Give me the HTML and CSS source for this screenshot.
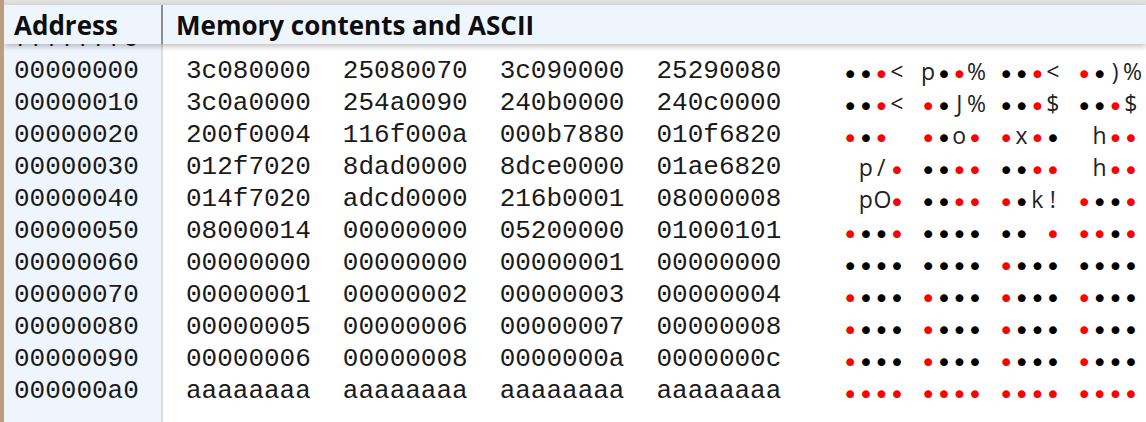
FILE: index.html
```html
<!DOCTYPE html>
<html>
<head>
<meta charset="utf-8">
<link rel="stylesheet" href="styles.css">
</head>
<body>
<div class="window">
  <div class="topstrip"></div>
  <div class="header">
    <div class="h-addr">Address</div>
    <div class="h-mem">Memory contents and ASCII</div>
  </div>
  <div class="body">
    <div class="addrcol">
      <div class="peek"><div class="line">fffffff0</div></div>
      <div class="line">00000000</div>
      <div class="line">00000010</div>
      <div class="line">00000020</div>
      <div class="line">00000030</div>
      <div class="line">00000040</div>
      <div class="line">00000050</div>
      <div class="line">00000060</div>
      <div class="line">00000070</div>
      <div class="line">00000080</div>
      <div class="line">00000090</div>
      <div class="line">000000a0</div>
    </div>
    <div class="datacol">
      <div class="peek"></div>

      <div class="line row">
        <div class="hex"><span>3c080000</span><span>25080070</span><span>3c090000</span><span>25290080</span></div>
        <div class="ascii">
          <span class="grp"><span class="ch dot">•</span><span class="ch dot">•</span><span class="ch dot red">•</span><span class="ch">&lt;</span></span>
          <span class="grp"><span class="ch">p</span><span class="ch dot">•</span><span class="ch dot red">•</span><span class="ch">%</span></span>
          <span class="grp"><span class="ch dot">•</span><span class="ch dot">•</span><span class="ch dot red">•</span><span class="ch">&lt;</span></span>
          <span class="grp"><span class="ch dot red">•</span><span class="ch dot">•</span><span class="ch">)</span><span class="ch">%</span></span>
        </div>
      </div>

      <div class="line row">
        <div class="hex"><span>3c0a0000</span><span>254a0090</span><span>240b0000</span><span>240c0000</span></div>
        <div class="ascii">
          <span class="grp"><span class="ch dot">•</span><span class="ch dot">•</span><span class="ch dot red">•</span><span class="ch">&lt;</span></span>
          <span class="grp"><span class="ch dot red">•</span><span class="ch dot">•</span><span class="ch">J</span><span class="ch">%</span></span>
          <span class="grp"><span class="ch dot">•</span><span class="ch dot">•</span><span class="ch dot red">•</span><span class="ch">$</span></span>
          <span class="grp"><span class="ch dot">•</span><span class="ch dot">•</span><span class="ch dot red">•</span><span class="ch">$</span></span>
        </div>
      </div>

      <div class="line row">
        <div class="hex"><span>200f0004</span><span>116f000a</span><span>000b7880</span><span>010f6820</span></div>
        <div class="ascii">
          <span class="grp"><span class="ch dot red">•</span><span class="ch dot">•</span><span class="ch dot red">•</span><span class="ch"></span></span>
          <span class="grp"><span class="ch dot red">•</span><span class="ch dot">•</span><span class="ch">o</span><span class="ch dot red">•</span></span>
          <span class="grp"><span class="ch dot red">•</span><span class="ch">x</span><span class="ch dot red">•</span><span class="ch dot">•</span></span>
          <span class="grp"><span class="ch"></span><span class="ch">h</span><span class="ch dot red">•</span><span class="ch dot red">•</span></span>
        </div>
      </div>

      <div class="line row">
        <div class="hex"><span>012f7020</span><span>8dad0000</span><span>8dce0000</span><span>01ae6820</span></div>
        <div class="ascii">
          <span class="grp"><span class="ch"></span><span class="ch">p</span><span class="ch">/</span><span class="ch dot red">•</span></span>
          <span class="grp"><span class="ch dot">•</span><span class="ch dot">•</span><span class="ch dot red">•</span><span class="ch dot red">•</span></span>
          <span class="grp"><span class="ch dot">•</span><span class="ch dot">•</span><span class="ch dot red">•</span><span class="ch dot red">•</span></span>
          <span class="grp"><span class="ch"></span><span class="ch">h</span><span class="ch dot red">•</span><span class="ch dot red">•</span></span>
        </div>
      </div>

      <div class="line row">
        <div class="hex"><span>014f7020</span><span>adcd0000</span><span>216b0001</span><span>08000008</span></div>
        <div class="ascii">
          <span class="grp"><span class="ch"></span><span class="ch">p</span><span class="ch">O</span><span class="ch dot red">•</span></span>
          <span class="grp"><span class="ch dot">•</span><span class="ch dot">•</span><span class="ch dot red">•</span><span class="ch dot red">•</span></span>
          <span class="grp"><span class="ch dot red">•</span><span class="ch dot">•</span><span class="ch">k</span><span class="ch">!</span></span>
          <span class="grp"><span class="ch dot red">•</span><span class="ch dot">•</span><span class="ch dot">•</span><span class="ch dot red">•</span></span>
        </div>
      </div>

      <div class="line row">
        <div class="hex"><span>08000014</span><span>00000000</span><span>05200000</span><span>01000101</span></div>
        <div class="ascii">
          <span class="grp"><span class="ch dot red">•</span><span class="ch dot">•</span><span class="ch dot">•</span><span class="ch dot red">•</span></span>
          <span class="grp"><span class="ch dot">•</span><span class="ch dot">•</span><span class="ch dot">•</span><span class="ch dot">•</span></span>
          <span class="grp"><span class="ch dot">•</span><span class="ch dot">•</span><span class="ch"></span><span class="ch dot red">•</span></span>
          <span class="grp"><span class="ch dot red">•</span><span class="ch dot red">•</span><span class="ch dot">•</span><span class="ch dot red">•</span></span>
        </div>
      </div>

      <div class="line row">
        <div class="hex"><span>00000000</span><span>00000000</span><span>00000001</span><span>00000000</span></div>
        <div class="ascii">
          <span class="grp"><span class="ch dot">•</span><span class="ch dot">•</span><span class="ch dot">•</span><span class="ch dot">•</span></span>
          <span class="grp"><span class="ch dot">•</span><span class="ch dot">•</span><span class="ch dot">•</span><span class="ch dot">•</span></span>
          <span class="grp"><span class="ch dot red">•</span><span class="ch dot">•</span><span class="ch dot">•</span><span class="ch dot">•</span></span>
          <span class="grp"><span class="ch dot">•</span><span class="ch dot">•</span><span class="ch dot">•</span><span class="ch dot">•</span></span>
        </div>
      </div>

      <div class="line row">
        <div class="hex"><span>00000001</span><span>00000002</span><span>00000003</span><span>00000004</span></div>
        <div class="ascii">
          <span class="grp"><span class="ch dot red">•</span><span class="ch dot">•</span><span class="ch dot">•</span><span class="ch dot">•</span></span>
          <span class="grp"><span class="ch dot red">•</span><span class="ch dot">•</span><span class="ch dot">•</span><span class="ch dot">•</span></span>
          <span class="grp"><span class="ch dot red">•</span><span class="ch dot">•</span><span class="ch dot">•</span><span class="ch dot">•</span></span>
          <span class="grp"><span class="ch dot red">•</span><span class="ch dot">•</span><span class="ch dot">•</span><span class="ch dot">•</span></span>
        </div>
      </div>

      <div class="line row">
        <div class="hex"><span>00000005</span><span>00000006</span><span>00000007</span><span>00000008</span></div>
        <div class="ascii">
          <span class="grp"><span class="ch dot red">•</span><span class="ch dot">•</span><span class="ch dot">•</span><span class="ch dot">•</span></span>
          <span class="grp"><span class="ch dot red">•</span><span class="ch dot">•</span><span class="ch dot">•</span><span class="ch dot">•</span></span>
          <span class="grp"><span class="ch dot red">•</span><span class="ch dot">•</span><span class="ch dot">•</span><span class="ch dot">•</span></span>
          <span class="grp"><span class="ch dot red">•</span><span class="ch dot">•</span><span class="ch dot">•</span><span class="ch dot">•</span></span>
        </div>
      </div>

      <div class="line row">
        <div class="hex"><span>00000006</span><span>00000008</span><span>0000000a</span><span>0000000c</span></div>
        <div class="ascii">
          <span class="grp"><span class="ch dot red">•</span><span class="ch dot">•</span><span class="ch dot">•</span><span class="ch dot">•</span></span>
          <span class="grp"><span class="ch dot red">•</span><span class="ch dot">•</span><span class="ch dot">•</span><span class="ch dot">•</span></span>
          <span class="grp"><span class="ch dot red">•</span><span class="ch dot">•</span><span class="ch dot">•</span><span class="ch dot">•</span></span>
          <span class="grp"><span class="ch dot red">•</span><span class="ch dot">•</span><span class="ch dot">•</span><span class="ch dot">•</span></span>
        </div>
      </div>

      <div class="line row">
        <div class="hex"><span>aaaaaaaa</span><span>aaaaaaaa</span><span>aaaaaaaa</span><span>aaaaaaaa</span></div>
        <div class="ascii">
          <span class="grp"><span class="ch dot red">•</span><span class="ch dot red">•</span><span class="ch dot red">•</span><span class="ch dot red">•</span></span>
          <span class="grp"><span class="ch dot red">•</span><span class="ch dot red">•</span><span class="ch dot red">•</span><span class="ch dot red">•</span></span>
          <span class="grp"><span class="ch dot red">•</span><span class="ch dot red">•</span><span class="ch dot red">•</span><span class="ch dot red">•</span></span>
          <span class="grp"><span class="ch dot red">•</span><span class="ch dot red">•</span><span class="ch dot red">•</span><span class="ch dot red">•</span></span>
        </div>
      </div>
    </div>
  </div>
</div>
</body>
</html>
```
FILE: styles.css
```css
html, body {
  margin: 0;
  padding: 0;
  background: #ffffff;
}

body {
  font-family: "Liberation Mono", "Courier New", monospace;
  color: #1a1a1a;
}

.window {
  width: 1146px;
  height: 422px;
  box-sizing: border-box;
  border-left: 4px solid #bb9d82;
  display: flex;
  flex-direction: column;
  overflow: hidden;
}

.topstrip {
  height: 5px;
  flex: none;
  background: #e2e2e2;
}

.header {
  flex: none;
  height: 39px;
  display: grid;
  grid-template-columns: 159px 1fr;
  background: #eef5fd;
  position: relative;
  z-index: 1;
  box-shadow: 0 2px 6px rgba(0, 0, 0, 0.28);
  font-family: "Open Sans", "Liberation Sans", sans-serif;
  font-weight: 700;
  font-size: 26px;
  color: #0d0d0d;
}

.h-addr {
  display: flex;
  align-items: center;
  padding-left: 10px;
  border-right: 2px solid #8e8e8e;
}

.h-mem {
  display: flex;
  align-items: center;
  padding-left: 13px;
}

.body {
  flex: 1;
  min-height: 0;
  display: grid;
  grid-template-columns: 159px 1fr;
}

.addrcol {
  background: #eef5fd;
  border-right: 2px solid #dcdcdc;
  padding-left: 10px;
}

.datacol {
  padding-left: 23px;
}

.peek {
  height: 11px;
  overflow: hidden;
  display: flex;
  flex-direction: column;
  justify-content: flex-end;
}

.line {
  flex: none;
  height: 32px;
  line-height: 32px;
  font-size: 26px;
  white-space: nowrap;
}

.row {
  display: flex;
}

.hex {
  display: flex;
  gap: 32px;
}

.ascii {
  display: flex;
  gap: 15.6px;
  margin-left: 61px;
  font-family: "Open Sans", "DejaVu Sans", sans-serif;
  font-size: 23px;
  color: #222222;
}

.grp {
  display: flex;
}

.ch {
  width: 15.6px;
  text-align: center;
}

.dot {
  font-family: "DejaVu Sans", sans-serif;
  font-size: 27px;
  color: #000000;
  position: relative;
  top: 4px;
}

.dot.red {
  color: #ff0000;
}
```
